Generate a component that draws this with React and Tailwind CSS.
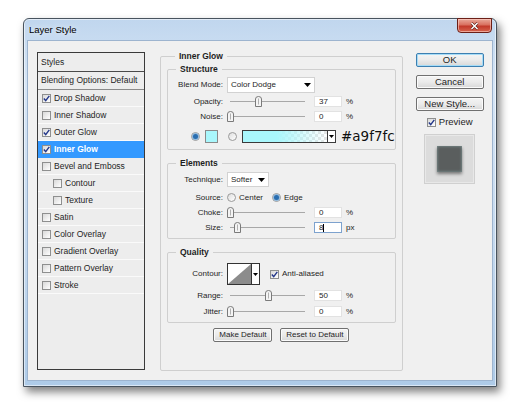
import React from 'react'

const ui = "font-['Liberation_Sans',Arial,sans-serif] text-[#1e1e1e]"

const styleRows = [
  { label: 'Drop Shadow', on: true },
  { label: 'Inner Shadow' },
  { label: 'Outer Glow', on: true },
  { label: 'Inner Glow', on: true, active: true },
  { label: 'Bevel and Emboss' },
  { label: 'Contour', sub: true },
  { label: 'Texture', sub: true },
  { label: 'Satin' },
  { label: 'Color Overlay' },
  { label: 'Gradient Overlay' },
  { label: 'Pattern Overlay' },
  { label: 'Stroke' },
]

const Check = ({ on }) => (
  <span className="flex h-[9px] w-[9px] shrink-0 items-center justify-center border border-[#8e8f8f] bg-gradient-to-br from-[#d9d9d9] to-white">
    {on && (
      <svg width="7" height="7" viewBox="0 0 7 7">
        <path d="M0.8 3.6 L2.7 5.6 L6.3 0.8" fill="none" stroke="#23378a" strokeWidth="1.4" />
      </svg>
    )}
  </span>
)

const Radio = ({ on }) => (
  <span className="flex h-[9px] w-[9px] shrink-0 items-center justify-center rounded-full border border-[#9a9a9a] bg-gradient-to-br from-[#dedede] to-white">
    {on && <span className="h-[5px] w-[5px] rounded-full bg-[#2a6eb0] shadow-[0_0_0_1px_#8fb8dc]" />}
  </span>
)

const Arrow = () => (
  <svg width="7" height="4" viewBox="0 0 7 4">
    <path d="M0 0H7L3.5 4Z" fill="#000" />
  </svg>
)

// track is 75px wide, pos is the thumb centre in px
const Slider = ({ pos }) => (
  <div className="relative ml-[3px] h-[11px] w-[75px]">
    <div className="absolute left-0 right-0 top-[5px] h-px bg-[#a8a8a8]" />
    <svg className="absolute top-0" style={{ left: pos - 3 }} width="7" height="11" viewBox="0 0 7 11">
      <path d="M0.5 3 Q0.5 0.5 3.5 0.5 Q6.5 0.5 6.5 3 V10.5 H0.5 Z" fill="#f4f4f4" stroke="#7a7a7a" />
      <path d="M3.5 2.5 V8.5" stroke="#b0b0b0" />
    </svg>
  </div>
)

const Field = ({ value, unit, focus }) => (
  <>
    <div
      className={`ml-[9px] flex h-[11px] w-[28px] items-center border bg-white pl-[4px] text-[8px] ${
        focus ? 'border-[#7da2ce]' : 'border-[#e2e2e2]'
      }`}
    >
      {value}
      {focus && <span className="h-[8px] w-px bg-black" />}
    </div>
    <span className="ml-[4px] text-[8px]">{unit}</span>
  </>
)

const Row = ({ label, className = '', children }) => (
  <div className={`flex items-center ${className}`}>
    <span className="w-[59px] shrink-0 pr-[4px] text-right text-[8px]">{label}</span>
    {children}
  </div>
)

const Group = ({ title, className = '', children }) => (
  <fieldset className={`rounded-[2px] border border-[#cfcfcf] ${className}`}>
    <legend className="ml-[8px] px-[4px] text-[8.5px] font-bold leading-[12px]">{title}</legend>
    {children}
  </fieldset>
)

const Button = ({ children, primary, className = '' }) => (
  <div
    className={`flex items-center justify-center rounded-[2px] border bg-gradient-to-b from-[#f4f4f4] via-[#ebebeb] to-[#d8d8d8] ${
      primary ? 'border-[#3c7fb1] shadow-[inset_0_0_0_1px_#a6dcf7]' : 'border-[#707070] shadow-[inset_0_0_0_1px_#fbfbfb]'
    } ${className}`}
  >
    {children}
  </div>
)

export default function App() {
  return (
    <div className={`h-[405px] w-[520px] overflow-hidden bg-white pl-[23px] pt-[18px] ${ui}`}>
      {/* window frame */}
      <div className="flex h-[369px] w-[474px] flex-col rounded-t-[6px] border border-[#48535e] bg-[linear-gradient(180deg,#c0d6ee_0%,#d7e6f6_18%,#c6daef_60%,#aecbe8_100%)] shadow-[inset_0_0_0_1px_rgba(255,255,255,0.55),3px_5px_9px_rgba(0,0,0,0.5)]">
        <div className="flex h-[22px] shrink-0 items-center pl-[5px]">
          <span className="text-[9.5px] text-black [text-shadow:0_0_6px_#fff]">Layer Style</span>
          <div className="-mt-[1px] ml-auto mr-[4px] flex h-[15px] w-[35px] items-center justify-center self-start rounded-b-[4px] border border-[#6b1f17] bg-[linear-gradient(180deg,#e9a99b_0%,#d9705f_45%,#c2392a_55%,#d6654f_100%)] shadow-[inset_0_0_0_1px_rgba(255,210,200,0.6)]">
            <svg width="9" height="8" viewBox="0 0 9 8">
              <path d="M1.5 1 L7.5 7 M7.5 1 L1.5 7" stroke="#5a1a12" strokeWidth="2.6" />
              <path d="M1.5 1 L7.5 7 M7.5 1 L1.5 7" stroke="#fff" strokeWidth="1.5" />
            </svg>
          </div>
        </div>

        {/* client area */}
        <div className="mx-[4px] flex h-[339px] items-start bg-[#f0f0f0] pl-[9px] shadow-[0_0_0_1px_#9db4cf]">
          {/* styles list */}
          <div className="mt-[11px] h-[318px] w-[108px] shrink-0 border border-[#3a3a3a] bg-[#ededed] text-[8.5px]">
            <div className="flex h-[19px] items-center border-b border-[#4a4a4a] pl-[3px]">Styles</div>
            <div className="flex h-[18px] items-center border-b border-[#8a8a8a] pl-[3px]">Blending Options: Default</div>
            {styleRows.map((r) => (
              <div
                key={r.label}
                className={`flex h-[17px] items-center gap-[3px] border-b ${
                  r.active ? 'border-[#3399ff] bg-[#3399ff] font-bold text-white' : 'border-[#fafafa]'
                } ${r.sub ? 'pl-[15px]' : 'pl-[4px]'}`}
              >
                <Check on={r.on} />
                {r.label}
              </div>
            ))}
          </div>

          {/* settings */}
          <Group title="Inner Glow" className="ml-[15px] mt-[9px] h-[321px] w-[242px] shrink-0 px-[6px] pt-[1px]">
            <Group title="Structure" className="pb-[6px] pt-[2px]">
              <Row label="Blend Mode:">
                <div className="flex h-[16px] w-[88px] items-center justify-between border border-[#d2d2d2] bg-white pl-[3px] pr-[3px] text-[8px]">
                  Color Dodge
                  <Arrow />
                </div>
              </Row>
              <Row label="Opacity:" className="mt-[3px] h-[11px]">
                <Slider pos={28} />
                <Field value="37" unit="%" />
              </Row>
              <Row label="Noise:" className="mt-[4px] h-[11px]">
                <Slider pos={0} />
                <Field value="0" unit="%" />
              </Row>
              <div className="mt-[8px] flex h-[13px] items-center pl-[23px]">
                <Radio on />
                <div className="ml-[5px] h-[13px] w-[13px] border border-[#8a8a8a] bg-[#a9f7fc]" />
                <div className="ml-[10px]">
                  <Radio />
                </div>
                <div className="ml-[5px] flex h-[13px] border border-[#3a3a3a]">
                  <div className="h-full w-[84px] bg-[conic-gradient(#e4e4e4_25%,#fff_0_50%,#e4e4e4_0_75%,#fff_0)] bg-[length:6px_6px]">
                    <div className="h-full w-full bg-[linear-gradient(90deg,#a9f7fc_0%,#a9f7fc_40%,rgba(169,247,252,0)_100%)]" />
                  </div>
                  <div className="flex w-[8px] items-center justify-center border-l border-[#3a3a3a] bg-white">
                    <svg width="5" height="3" viewBox="0 0 5 3">
                      <path d="M0 0H5L2.5 3Z" fill="#000" />
                    </svg>
                  </div>
                </div>
                <span className="ml-[5px] whitespace-nowrap font-['DejaVu_Sans',sans-serif] text-[13.5px] leading-none text-[#111]">
                  #a9f7fc
                </span>
              </div>
            </Group>

            <Group title="Elements" className="mt-[7px] pb-[5px] pt-[3px]">
              <Row label="Technique:">
                <div className="flex h-[15px] w-[42px] items-center justify-between border border-[#d2d2d2] bg-white pl-[3px] pr-[3px] text-[8px]">
                  Softer
                  <Arrow />
                </div>
              </Row>
              <Row label="Source:" className="mt-[5px] h-[11px]">
                <Radio />
                <span className="ml-[3px] text-[8px]">Center</span>
                <div className="ml-[9px]">
                  <Radio on />
                </div>
                <span className="ml-[3px] text-[8px]">Edge</span>
              </Row>
              <Row label="Choke:" className="mt-[4px] h-[11px]">
                <Slider pos={0} />
                <Field value="0" unit="%" />
              </Row>
              <Row label="Size:" className="mt-[4px] h-[11px]">
                <Slider pos={7} />
                <Field value="8" unit="px" focus />
              </Row>
            </Group>

            <Group title="Quality" className="mt-[7px] pb-[5px] pt-[5px]">
              <Row label="Contour:">
                <div className="flex h-[22px] w-[33px] border border-[#333]">
                  <svg width="23" height="20" viewBox="0 0 23 20" className="bg-white">
                    <path d="M0 20 L23 0 V20 Z" fill="#8c8c8c" />
                  </svg>
                  <div className="flex flex-1 items-center justify-center border-l border-[#333] bg-white">
                    <svg width="5" height="3" viewBox="0 0 5 3">
                      <path d="M0 0H5L2.5 3Z" fill="#000" />
                    </svg>
                  </div>
                </div>
                <div className="ml-[10px]">
                  <Check on />
                </div>
                <span className="ml-[3px] text-[8px]">Anti-aliased</span>
              </Row>
              <Row label="Range:" className="mt-[5px] h-[11px]">
                <Slider pos={38} />
                <Field value="50" unit="%" />
              </Row>
              <Row label="Jitter:" className="mt-[5px] h-[11px]">
                <Slider pos={0} />
                <Field value="0" unit="%" />
              </Row>
            </Group>

            <div className="mt-[5px] flex justify-center gap-[8px] text-[8px]">
              <Button className="h-[14px] w-[59px]">Make Default</Button>
              <Button className="h-[14px] w-[69px]">Reset to Default</Button>
            </div>
          </Group>

          {/* dialog buttons and preview */}
          <div className="ml-[13px] mt-[12px] flex w-[68px] shrink-0 flex-col items-center text-[9.5px]">
            <Button primary className="h-[14px] w-full">OK</Button>
            <Button className="mt-[8px] h-[14px] w-full">Cancel</Button>
            <Button className="mt-[8px] h-[14px] w-full">New Style...</Button>
            <div className="mt-[6px] flex h-[10px] items-center gap-[3px]">
              <Check on />
              Preview
            </div>
            <div className="mt-[7px] flex h-[50px] w-[51px] items-center justify-center border border-[#d0d0d0] bg-[#dcdcdc] shadow-[inset_0_0_0_1px_#e8e8e8]">
              <div className="h-[26px] w-[25px] bg-[#5a5e5e] shadow-[inset_0_0_3px_rgba(190,240,240,0.45),0_2px_3px_rgba(0,0,0,0.45)]" />
            </div>
          </div>
        </div>
      </div>
    </div>
  )
}
